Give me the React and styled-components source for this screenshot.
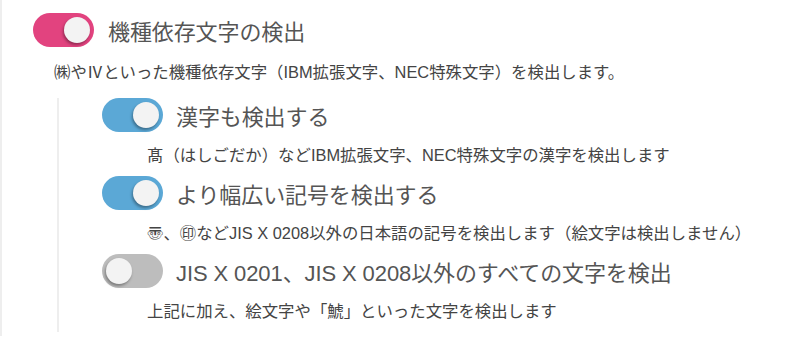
import React from "react";
import styled, { createGlobalStyle } from "styled-components";

const GlobalStyle = createGlobalStyle`
  body {
    margin: 0;
    background: #ffffff;
    font-family: "Liberation Sans", "Noto Sans CJK JP", sans-serif;
  }
`;

const Panel = styled.div`
  border-left: 2px solid #eeeeee;
  padding: 13px 0 4px 31px;
  width: 760px;
`;

const Row = styled.div`
  display: flex;
  align-items: center;
  gap: ${(p) => (p.$top ? "14px" : "13px")};
  height: 34px;
`;

const Track = styled.span`
  display: flex;
  align-items: center;
  justify-content: ${(p) => (p.$on ? "flex-end" : "flex-start")};
  box-sizing: border-box;
  width: 61px;
  height: 34px;
  padding: 0 4px;
  border-radius: 17px;
  background: ${(p) => p.$color};
  flex-shrink: 0;
`;

const Knob = styled.span`
  width: 26px;
  height: 26px;
  border-radius: 50%;
  background: #f3f3f3;
  box-shadow: -1px 2px 3px rgba(0, 0, 0, 0.35);
`;

const Title = styled.span`
  font-size: 22px;
  color: #555555;
  letter-spacing: -0.1px;
  white-space: nowrap;
`;

const Desc = styled.p`
  margin: 0;
  margin-left: ${(p) => p.$indent}px;
  font-size: 16.4px;
  line-height: 24px;
  color: #444444;
  white-space: nowrap;
  padding: ${(p) => (p.$top ? "13px 0 14px" : "11px 0 9px")};
`;

const Nested = styled.div`
  margin-left: 24px;
  border-left: 2px solid #eeeeee;
  padding-left: 43px;
  display: flex;
  flex-direction: column;
`;

const Toggle = ({ on, color }) => (
  <Track $on={on} $color={color}>
    <Knob />
  </Track>
);

const items = [
  {
    on: true,
    title: "漢字も検出する",
    desc: "髙（はしごだか）などIBM拡張文字、NEC特殊文字の漢字を検出します",
  },
  {
    on: true,
    title: "より幅広い記号を検出する",
    desc: "〠、㊞などJIS X 0208以外の日本語の記号を検出します（絵文字は検出しません）",
  },
  {
    on: false,
    title: "JIS X 0201、JIS X 0208以外のすべての文字を検出",
    desc: "上記に加え、絵文字や「鯱」といった文字を検出します",
  },
];

export default function App() {
  return (
    <>
      <GlobalStyle />
      <Panel>
        <Row $top>
          <Toggle on color="#e2437f" />
          <Title>機種依存文字の検出</Title>
        </Row>
        <Desc $indent={21} $top>
          ㈱やⅣといった機種依存文字（IBM拡張文字、NEC特殊文字）を検出します。
        </Desc>
        <Nested>
          {items.map((it) => (
            <div key={it.title}>
              <Row>
                <Toggle on={it.on} color={it.on ? "#5ba8d6" : "#bdbdbd"} />
                <Title>{it.title}</Title>
              </Row>
              <Desc $indent={45}>{it.desc}</Desc>
            </div>
          ))}
        </Nested>
      </Panel>
    </>
  );
}
